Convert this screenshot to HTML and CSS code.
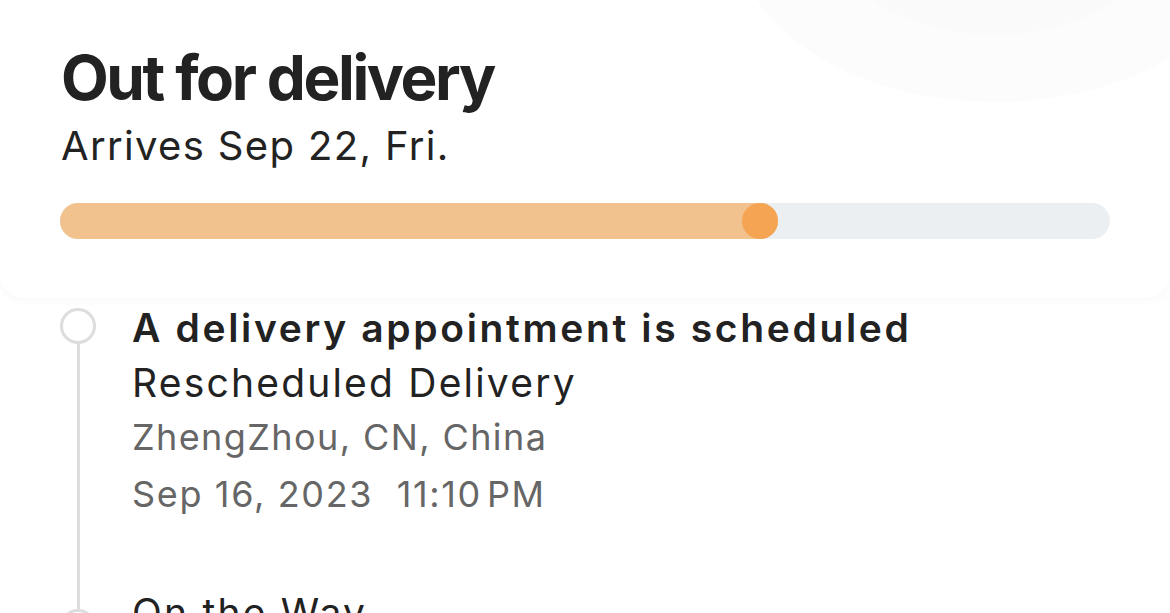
FILE: index.html
```html
<!DOCTYPE html>
<html lang="en">
<head>
  <meta charset="UTF-8" />
  <meta name="viewport" content="width=device-width, initial-scale=1.0"/>
  <title>Tracking</title>
  <link rel="stylesheet" href="styles.css">
</head>
<body>

  <section class="status-card">
    <h1 class="status-title">Out for delivery</h1>
    <p class="status-eta">Arrives Sep 22, Fri.</p>

    <!-- progress of the parcel -->
    <div class="progress">
      <div class="progress-fill" style="width: 68.4%;">
        <span class="progress-knob"></span>
      </div>
    </div>
  </section>

  <ul class="timeline">
    <li class="event">
      <span class="event-dot"></span>
      <div class="event-body">
        <div class="event-title">A delivery appointment is scheduled</div>
        <div class="event-desc">Rescheduled Delivery</div>
        <div class="event-meta">ZhengZhou, CN, China</div>
        <div class="event-meta event-time">Sep 16, 2023&nbsp; 11:10&#8202;PM</div>
      </div>
    </li>
    <li class="event">
      <span class="event-dot event-dot-low"></span>
      <div class="event-body">
        <div class="event-desc">On the Way</div>
      </div>
    </li>
  </ul>

</body>
</html>
```

FILE: styles.css
```css
body {
  font-family: Inter, "Noto Sans", sans-serif;
  background-color: #ffffff;
  color: #222222;
  margin: 0;
  padding: 0;
  overflow: hidden;
}

.status-card {
  position: relative;
  overflow: hidden;
  background-color: #ffffff;
  border-radius: 0 0 24px 24px;
  box-shadow: 0 2px 10px rgba(0, 0, 0, 0.035);
  padding: 46px 60px 59px 60px;
}
/* faint blobs in the top right corner */
.status-card::before,
.status-card::after {
  content: "";
  position: absolute;
  border-radius: 50%;
}
.status-card::before {
  width: 520px;
  height: 342px;
  right: -85px;
  top: -240px;
  background-color: #fcfcfc;
}
.status-card::after {
  width: 310px;
  height: 185px;
  right: 20px;
  top: -150px;
  background-color: #fafafa;
}
.status-title {
  position: relative;
  z-index: 1;
  margin: 0 0 0 1px;
  font-size: 62px;
  font-weight: 700;
  line-height: 64px;
  letter-spacing: -2.4px;
}
.status-eta {
  position: relative;
  z-index: 1;
  margin: 6px 0 0 1px;
  font-size: 40px;
  line-height: 60px;
  letter-spacing: 1.35px;
}
.progress {
  position: relative;
  z-index: 1;
  margin-top: 27px;
  height: 36px;
  border-radius: 18px;
  background-color: #ebeff2;
}
.progress-fill {
  position: relative;
  height: 100%;
  border-radius: 18px;
  background-color: #f2c28e;
}
.progress-knob {
  position: absolute;
  right: 0;
  top: 0;
  width: 36px;
  height: 36px;
  border-radius: 50%;
  background-color: #f4a452;
}

.timeline {
  list-style: none;
  margin: 0;
  padding: 2px 0 0 60px;
}
.event {
  display: flex;
  gap: 36px;
  position: relative;
  padding-bottom: 63px;
}
.event::before {
  content: "";
  position: absolute;
  left: 16.5px;
  top: 43px;
  bottom: -24px;
  width: 3px;
  background-color: #dddddd;
}
.event:last-child::before {
  display: none;
}
.event-dot {
  flex: none;
  box-sizing: border-box;
  width: 36px;
  height: 36px;
  margin-top: 8px;
  border: 3px solid #dddddd;
  border-radius: 50%;
  background-color: #ffffff;
}
.event-dot-low {
  margin-top: 24px;
}
.event-title {
  font-size: 39px;
  font-weight: 600;
  line-height: 55px;
  letter-spacing: 2.65px;
}
.event-desc {
  font-size: 39px;
  line-height: 55px;
  letter-spacing: 2.2px;
}
.event-meta {
  font-size: 36px;
  line-height: 55px;
  letter-spacing: 1.4px;
  color: #666666;
}
.event-time {
  margin-top: 2px;
  letter-spacing: 1.65px;
}
```
